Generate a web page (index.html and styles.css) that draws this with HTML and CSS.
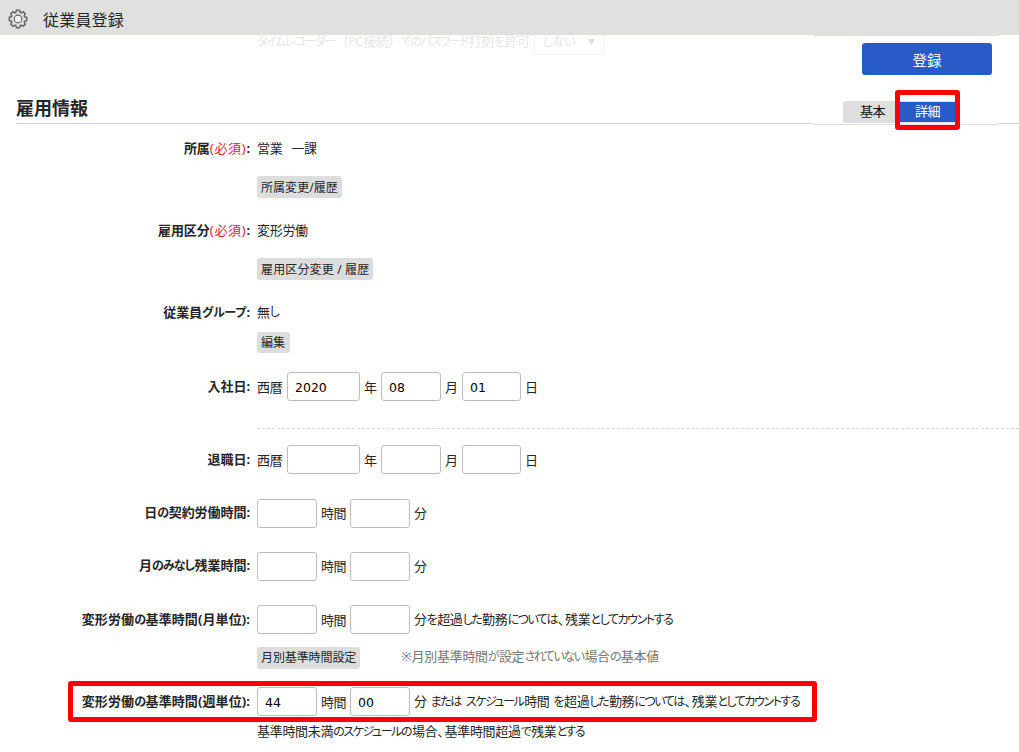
FILE: index.html
```html
<!DOCTYPE html>
<html lang="ja">
<head>
<meta charset="utf-8">
<title>従業員登録</title>
<link rel="stylesheet" href="styles.css">
</head>
<body>
<header class="topbar">
  <svg class="gear" viewBox="0 0 20 20" width="20" height="20" fill="none" stroke="#666" stroke-width="1.5" stroke-linejoin="round">
    <path d="M8.300 1.300h3.400l.5 2.200 1 .4 1.900-1.200 2.200 2.200-1.200 1.900.4 1 2.200.5v3.400l-2.200.5-.4 1 1.200 1.900-2.200 2.200-1.900-1.200-1 .4-.5 2.200H8.300l-.5-2.200-1-.4-1.900 1.200-2.200-2.200 1.200-1.900-.4-1-2.200-.5V8.300l2.200-.5.4-1-1.200-1.900 2.200-2.200 1.900 1.200 1-.4z"/>
    <circle cx="10" cy="10" r="3.800" fill="#f3f3f2" stroke-width="1.200"/>
  </svg>
  <h1 class="title">従業員登録</h1>
</header>
<main class="page">
  <div class="faded">
    <span class="faded-label"><span class="k">タイムレコーダー</span>（PC接続）<span class="k">でのパスワード</span>打刻<span class="k">を</span>許可</span>
    <span class="select"><span class="k">しない</span><span class="arrow"></span></span>
  </div>
  <h2 class="section">雇用情報</h2>
  <aside class="panel">
    <button class="submit">登録</button>
    <div class="tabs"><span class="tab">基本</span><span class="tab active">詳細</span></div>
    <div class="mark mark-tab"></div>
  </aside>
  <form class="form">
    <div class="row group">
      <div class="label">所属<span class="req">(必須)</span>:</div>
      <div class="content"><div class="line">営業<span class="gap"></span>一課</div><span class="btn b1">所属変更/履歴</span></div>
    </div>
    <div class="row group">
      <div class="label">雇用区分<span class="req">(必須)</span>:</div>
      <div class="content"><div class="line">変形労働</div><span class="btn b2">雇用区分変更 / 履歴</span></div>
    </div>
    <div class="row group short">
      <div class="label">従業員<span class="k gr">グループ</span>:</div>
      <div class="content"><div class="line">無<span class="k">し</span></div><span class="btn b3">編集</span></div>
    </div>
    <div class="row date">
      <div class="label">入社日:</div>
      <div class="content line"><span class="era">西暦</span><input class="year" value="2020"><span class="unit">年</span><input class="month" value="08"><span class="unit">月</span><input class="day" value="01"><span class="unit">日</span></div>
    </div>
    <div class="rule"></div>
    <div class="row date leave">
      <div class="label">退職日:</div>
      <div class="content line"><span class="era">西暦</span><input class="year"><span class="unit">年</span><input class="month"><span class="unit">月</span><input class="day"><span class="unit">日</span></div>
    </div>
    <div class="row time">
      <div class="label">日<span class="k">の</span>契約労働時間:</div>
      <div class="content line"><input><span class="hour">時間</span><input><span class="after">分</span></div>
    </div>
    <div class="row time">
      <div class="label">月<span class="k">のみなし</span>残業時間:</div>
      <div class="content line"><input><span class="hour">時間</span><input><span class="after">分</span></div>
    </div>
    <div class="row time monthly">
      <div class="label">変形労働<span class="k">の</span>基準時間(月単位):</div>
      <div class="content line"><input><span class="hour">時間</span><input><span class="after">分<span class="k">を</span>超過<span class="k">した</span>勤務<span class="k">については</span><span class="c">、</span>残業<span class="k">としてカウントする</span></span></div>
    </div>
    <div class="row setting">
      <div class="content line"><span class="btn b4">月別基準時間設定</span><span class="note">※月別基準時間<span class="k">が</span>設定<span class="k">されていない</span>場合<span class="k">の</span>基本値</span></div>
    </div>
    <div class="row time weekly">
      <div class="label">変形労働<span class="k">の</span>基準時間(週単位):</div>
      <div class="content line"><input value="44"><span class="hour">時間</span><input value="00"><span class="after">分 <span class="k">または</span> <span class="k">スケジュール</span>時間 <span class="k">を</span>超過<span class="k">した</span>勤務<span class="k">については</span><span class="c">、</span>残業<span class="k">としてカウントする</span></span></div>
      <div class="mark mark-row"></div>
    </div>
    <div class="row last">
      <div class="content line"><span>基準時間未満<span class="k">のスケジュールの</span>場合<span class="c">、</span>基準時間超過<span class="k">で</span>残業<span class="k">とする</span></span></div>
    </div>
  </form>
</main>
</body>
</html>
```
FILE: styles.css
```css
* { box-sizing: border-box; }
body {
  margin: 0;
  height: 752px;
  overflow: hidden;
  background: #fff;
  color: #262626;
  font: 13px/20px "Noto Sans", "Noto Sans CJK JP", sans-serif;
  letter-spacing: -0.3px;
}
.k { margin-right: 0.8px; font-size: 12px; font-feature-settings: "palt"; letter-spacing: -1.42px; }
.c { margin-right: 1.5px; font-feature-settings: "palt"; letter-spacing: -0.8px; }
.topbar {
  display: flex;
  align-items: center;
  height: 35px;
  padding: 3px 8px 0;
  background: #e0e0de;
}
.gear { flex: none; }
.title { margin: 2px 0 0 15px; font-size: 16px; line-height: 22px; font-weight: 400; letter-spacing: 0.2px; }
.page { position: relative; }
.faded {
  display: flex;
  height: 21px;
  padding-left: 257px;
  color: #e6e6e6;
  line-height: 13px;
  white-space: nowrap;
}
.faded-label { width: 277px; letter-spacing: -0.5px; }
.faded .k { letter-spacing: -1.35px; }
.select {
  display: flex;
  justify-content: space-between;
  width: 70px;
  height: 20px;
  padding: 0 8px 0 8px;
  border: 1px solid #f3f3f3;
  border-top: 0;
  border-radius: 0 0 3px 3px;
}
.select .k { letter-spacing: -0.4px; }
.arrow { margin-top: 4px; width: 7px; height: 6px; background: #ddd; clip-path: polygon(0 0, 100% 0, 50% 100%); }
.section {
  height: 68px;
  margin: 0 0 0 16px;
  padding-top: 40px;
  border-bottom: 1px solid #d8d8d8;
  font-size: 18px;
  line-height: 24px;
  font-weight: 700;
  letter-spacing: 0;
}
.panel {
  position: absolute;
  left: 813px;
  top: 0;
  width: 186px;
  height: 90px;
  padding: 7px 7px 0 30px;
  border-top: 1px solid #e0e0de;
  border-bottom: 1px solid #ddd;
  background: #fff;
}
.submit {
  display: block;
  width: 130px;
  height: 32px;
  margin-left: 19px;
  padding: 2px 0 0;
  border: 0;
  border-radius: 3px;
  background: #285ac8;
  color: #fff;
  font: 14.5px/20px "Noto Sans CJK JP", sans-serif;
}
.tabs { display: flex; width: 114px; height: 22px; margin-top: 26px; border-radius: 3px; background: #dedede; overflow: hidden; color: #111; }
.tab { width: 55px; padding-left: 17px; line-height: 21px; letter-spacing: -0.6px; }
.tab.active { width: 59px; height: 20px; margin-top: 1px; background: #285ac8; color: #fff; line-height: 19px; }
.mark { position: absolute; border: 5px solid #fe0000; border-radius: 3px; pointer-events: none; }
.mark-tab { left: 82px; top: 54px; width: 65px; height: 40px; }
.form { padding-top: 15px; }
.row { position: relative; display: grid; grid-template-columns: 250px 1fr; column-gap: 7px; white-space: nowrap; }
.label { text-align: right; font-weight: 700; letter-spacing: -0.05px; }
.label .k { margin-right: 0.5px; letter-spacing: -0.95px; }
.label .gr { letter-spacing: -0.3px; }
.req { color: #dc2341; font-weight: 400; letter-spacing: 0.7px; }
.content { grid-column: 2; }
.line { display: flex; align-items: center; height: 20px; }
.group { height: 82px; }
.group .label { position: relative; top: -1px; }
.group .btn { margin-top: 17px; }
.group .line { margin: -1px 0 1px; }
.short { height: 74px; }
.short .btn { margin-top: 9px; height: 21px; line-height: 21px; }
.gap { width: 9px; }
.btn { display: inline-block; height: 22px; border-radius: 3px; background: #ddd; padding: 0 4px; line-height: 23px; font-size: 12px; letter-spacing: 0.05px; }
.b1 { width: 85px; }
.b2 { width: 116px; letter-spacing: 0.15px; }
.b3 { width: 33px; }
.b4 { flex: none; width: 103px; letter-spacing: -0.1px; line-height: 22px; }
.date { height: 31px; margin-top: -5px; }
.date .line, .time .line { height: 29px; }
.date .label { line-height: 28px; }
.time .label { line-height: 27px; }
input {
  flex: none;
  width: 60px;
  height: 29px;
  padding: 1px 0 0 7px;
  border: 1px solid #bdbdbd;
  border-radius: 3px;
  background: #fff;
  color: #000;
  font: 12.5px "DejaVu Sans", sans-serif;
}
.era { width: 30px; }
.year { width: 73px; }
.day { width: 59px; }
.unit { width: 21px; padding-left: 4px; }
.hour { width: 33px; padding-left: 4px; letter-spacing: -0.6px; }
.after { padding-left: 4px; }
.rule { margin: 25px 0 0 257px; border-top: 1px dashed #d8d8d8; }
.leave { height: 54px; margin-top: 16px; }
.time { height: 53px; }
.time .hour, .time .after { margin-top: -1px; }
.monthly { height: 42px; }
.monthly .hour, .monthly .after, .weekly .hour, .weekly .after { margin-top: 0; }
.monthly .label, .weekly .label { line-height: 28px; letter-spacing: 0.1px; }
.setting { height: 40px; }
.setting .line { height: 22px; }
.note { margin: -3px 0 0 41px; color: #777; }
.weekly { height: 34px; }
.weekly .after { word-spacing: 0.9px; }
.mark-row { left: 68px; top: -6px; width: 749px; height: 41px; }
```
